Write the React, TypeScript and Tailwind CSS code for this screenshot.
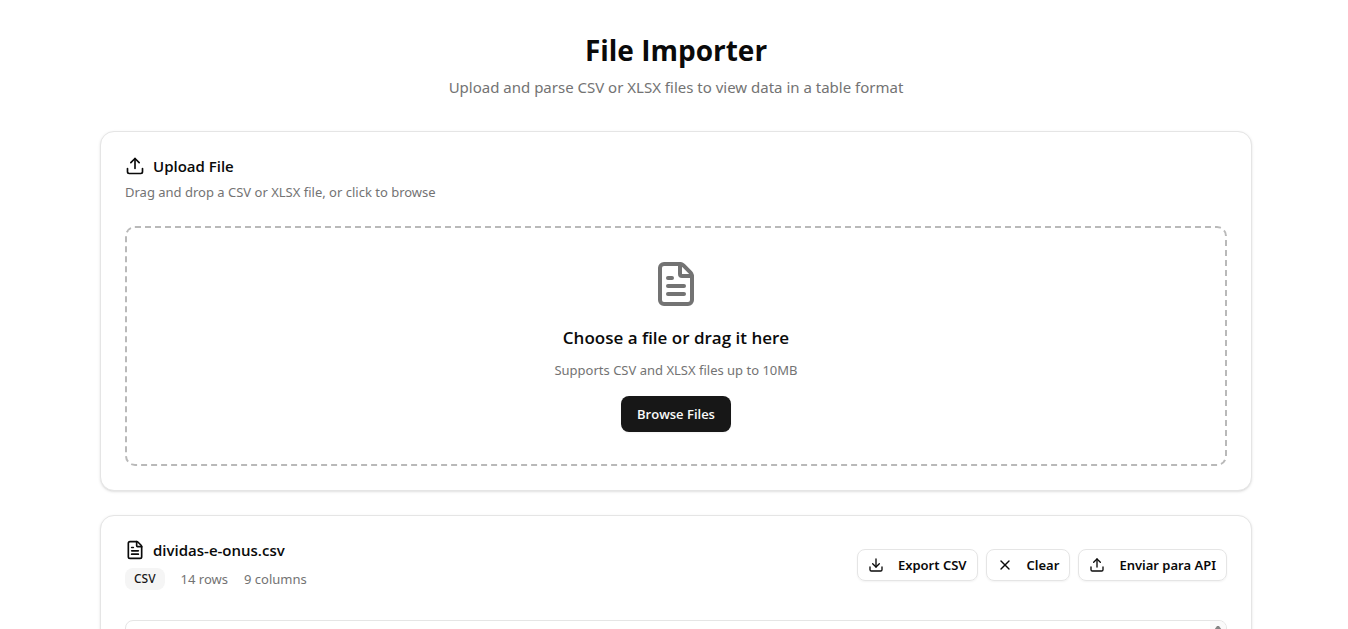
import React, { useRef, useState } from 'react';
import { Download, FileText, Upload, X } from 'lucide-react';

const INITIAL_FILE = {
  name: 'dividas-e-onus.csv',
  type: 'CSV',
  rows: 14,
  columns: 9
};

const ACTIONS = [
  { label: 'Export CSV', icon: Download },
  { label: 'Clear', icon: X },
  { label: 'Enviar para API', icon: Upload }
];

const Card: React.FC<{ children: React.ReactNode }> = ({ children }) => (
  <section className="flex flex-col gap-6 rounded-[14px] border border-[#e5e5e5] bg-white p-6 shadow-sm">
    {children}
  </section>
);

const UploadCard: React.FC = () => {
  const inputRef = useRef<HTMLInputElement>(null);
  const [dragging, setDragging] = useState(false);

  return (
    <Card>
      <div className="flex flex-col gap-1.5">
        <h2 className="flex items-center gap-2 font-['Open_Sans',sans-serif] text-[15px] leading-5 font-semibold">
          <Upload className="w-5 h-5" aria-hidden="true" />
          Upload File
        </h2>
        <p className="text-[13px] leading-5 text-[#737373]">Drag and drop a CSV or XLSX file, or click to browse</p>
      </div>

      <div
        onDragOver={(e) => {
          e.preventDefault();
          setDragging(true);
        }}
        onDragLeave={() => setDragging(false)}
        onDrop={(e) => {
          e.preventDefault();
          setDragging(false);
        }}
        className={`flex flex-col items-center rounded-[10px] border-2 border-dashed p-8 text-center transition-colors ${
          dragging ? 'border-[#171717]' : 'border-[#b9b9b9]'
        }`}
      >
        <FileText className="w-12 h-12 mb-4 text-[#737373]" aria-hidden="true" />
        <h3 className="mb-2 font-['Open_Sans',sans-serif] text-[17px] leading-7 font-semibold">
          Choose a file or drag it here
        </h3>
        <p className="mb-4 text-[13px] leading-5 text-[#737373]">Supports CSV and XLSX files up to 10MB</p>
        <input ref={inputRef} type="file" accept=".csv,.xlsx" aria-label="File" className="hidden" />
        <button
          onClick={() => inputRef.current?.click()}
          className="h-9 rounded-lg bg-[#171717] px-4 font-['Open_Sans',sans-serif] text-[13px] leading-5 font-semibold text-[#fafafa] shadow-xs hover:bg-[#171717]/90"
        >
          Browse Files
        </button>
      </div>
    </Card>
  );
};

const FileCard: React.FC = () => {
  const file = INITIAL_FILE;

  return (
    <Card>
      <div className="mb-1.5 flex flex-wrap items-center justify-between gap-4">
        <div className="flex flex-col gap-2">
          <h2 className="flex items-center gap-2 font-['Open_Sans',sans-serif] text-[15px] leading-5 font-semibold">
            <FileText className="w-5 h-5" aria-hidden="true" />
            {file.name}
          </h2>
          <div className="flex items-center gap-4 text-[13px] leading-5 text-[#737373]">
            <span className="h-[22px] rounded-lg bg-[#f5f5f5] px-[9px] text-xs leading-[22px] font-medium text-[#171717]">
              {file.type}
            </span>
            <span>{file.rows} rows</span>
            <span>{file.columns} columns</span>
          </div>
        </div>

        <div className="flex gap-2">
          {ACTIONS.map(({ label, icon: Icon }) => (
            <button
              key={label}
              className="flex h-8 items-center gap-3.5 rounded-lg border border-[#e5e5e5] px-2.5 text-[13px] leading-5 font-semibold shadow-xs hover:bg-[#f5f5f5]"
            >
              <Icon className="w-4 h-4" aria-hidden="true" />
              {label}
            </button>
          ))}
        </div>
      </div>

      {/* Table viewport with its scroll track */}
      <div className="flex h-96 justify-end overflow-hidden rounded-lg border border-[#e5e5e5]">
        <div className="flex w-4 justify-center bg-[#fafafa] pt-1">
          <svg className="w-2 h-1.5" viewBox="0 0 8 6" fill="#858585" aria-hidden="true">
            <path d="M3 1h2l2.5 3.5V6H0.5V4.5z" />
          </svg>
        </div>
      </div>
    </Card>
  );
};

export default function App() {
  return (
    <div className="h-screen overflow-hidden bg-white pl-1 font-['Noto_Sans',sans-serif] text-[#0a0a0a]">
      <main className="mx-auto max-w-6xl pt-8">
        <header className="mb-8 text-center">
          <h1 className="mb-[7px] font-['Open_Sans',sans-serif] text-[28px] leading-9 font-bold">File Importer</h1>
          <p className="text-[15px] leading-6 text-[#737373]">
            Upload and parse CSV or XLSX files to view data in a table format
          </p>
        </header>
        <div className="flex flex-col gap-6">
          <UploadCard />
          <FileCard />
        </div>
      </main>
    </div>
  );
}
